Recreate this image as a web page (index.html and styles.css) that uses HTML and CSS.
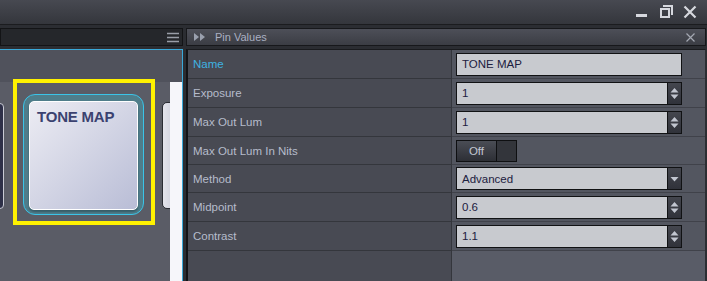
FILE: index.html
```html
<!DOCTYPE html>
<html lang="en">
<head>
    <title>Pin Values</title>
    <link rel="stylesheet" href="styles.css">
</head>
<body>

    <div class="titlebar">
        <svg class="win-btn" width="14" height="14" viewBox="0 0 14 14"><rect x="1" y="9" width="11" height="3" fill="#d6d8de"/></svg>
        <svg class="win-btn" width="14" height="14" viewBox="0 0 14 14"><path d="M4 1h9v9" fill="none" stroke="#d6d8de" stroke-width="2"/><rect x="2" y="4" width="8" height="8" fill="none" stroke="#d6d8de" stroke-width="2"/></svg>
        <svg class="win-btn" width="14" height="14" viewBox="0 0 14 14"><path d="M1.5 1.5l11 11M12.5 1.5l-11 11" stroke="#d6d8de" stroke-width="2.2"/></svg>
    </div>

    <div class="main">
        <div class="left">
            <div class="toolbar">
                <svg width="12" height="11" viewBox="0 0 12 11"><path d="M0 1.5h12M0 5.5h12M0 9.5h12" stroke="#9a9ea8" stroke-width="1.4"/></svg>
            </div>
            <div class="canvas">
                <div class="canvas-strip"></div>
                <div class="node-edge"></div>
                <div class="node-next"></div>
                <div class="white-col"></div>
                <div class="selection">
                    <div class="node-glow">
                        <div class="node-card">TONE MAP</div>
                    </div>
                </div>
            </div>
        </div>

        <div class="right">
            <div class="panel-head">
                <svg width="12" height="8" viewBox="0 0 12 8"><path d="M0 0l5 4-5 4zM6 0l5 4-5 4z" fill="#9aa0ae"/></svg>
                <span class="panel-title">Pin Values</span>
                <svg class="panel-close" width="9" height="9" viewBox="0 0 9 9"><path d="M0.5 0.5l8 8M8.5 0.5l-8 8" stroke="#a4a8b2" stroke-width="1.2"/></svg>
            </div>
            <div class="grid">
                <div class="label active">Name</div>
                <div class="value"><div class="field full">TONE MAP</div></div>

                <div class="label">Exposure</div>
                <div class="value"><div class="field"><span class="text">1</span><span class="spin"><svg width="9" height="13" viewBox="0 0 9 13"><path d="M4.5 1l4 4.5h-8zM4.5 12l4-4.5h-8z" fill="#c2c6d0"/></svg></span></div></div>

                <div class="label">Max Out Lum</div>
                <div class="value"><div class="field"><span class="text">1</span><span class="spin"><svg width="9" height="13" viewBox="0 0 9 13"><path d="M4.5 1l4 4.5h-8zM4.5 12l4-4.5h-8z" fill="#c2c6d0"/></svg></span></div></div>

                <div class="label">Max Out Lum In Nits</div>
                <div class="value"><div class="toggle"><span class="toggle-off">Off</span><span class="toggle-rest"></span></div></div>

                <div class="label">Method</div>
                <div class="value"><div class="field"><span class="text">Advanced</span><span class="spin"><svg width="9" height="6" viewBox="0 0 9 6"><path d="M0.5 1h8l-4 4.5z" fill="#c2c6d0"/></svg></span></div></div>

                <div class="label">Midpoint</div>
                <div class="value"><div class="field"><span class="text">0.6</span><span class="spin"><svg width="9" height="13" viewBox="0 0 9 13"><path d="M4.5 1l4 4.5h-8zM4.5 12l4-4.5h-8z" fill="#c2c6d0"/></svg></span></div></div>

                <div class="label">Contrast</div>
                <div class="value"><div class="field"><span class="text">1.1</span><span class="spin"><svg width="9" height="13" viewBox="0 0 9 13"><path d="M4.5 1l4 4.5h-8zM4.5 12l4-4.5h-8z" fill="#c2c6d0"/></svg></span></div></div>

                <div class="label filler"></div>
                <div class="value filler"></div>
            </div>
        </div>
    </div>

</body>
</html>
```

FILE: styles.css
```css
body {
    margin: 0;
    width: 707px;
    height: 281px;
    overflow: hidden;
    background-color: #2b2d32;
    font-family: 'Liberation Sans', Arial, sans-serif;
    font-size: 11.5px;
}

.titlebar {
    height: 24px;
    border-bottom: 1px solid #1b1c1f;
    background: linear-gradient(#474951, #34363c);
    display: flex;
    justify-content: flex-end;
    align-items: flex-start;
    padding-right: 10px;
    gap: 10px;
}

.win-btn {
    margin-top: 5px;
}

.main {
    display: flex;
    gap: 3px;
    padding-top: 3px;
    height: 253px;
}

.left {
    width: 183px;
    display: flex;
    flex-direction: column;
    gap: 3px;
}

.toolbar {
    height: 16px;
    background-color: #25272b;
    border: 1px solid #131416;
    display: flex;
    justify-content: flex-end;
    align-items: center;
    padding-right: 3px;
}

.canvas {
    flex: 1;
    position: relative;
    background-color: #5a5c66;
    border-right: 1px solid #3aa9d9;
    border-top: 1px solid #3aa9d9;
    overflow: hidden;
}

.canvas-strip {
    height: 32px;
    background-color: #50525c;
}

.node-edge {
    position: absolute;
    left: -6px;
    top: 53px;
    width: 8px;
    height: 104px;
    background-color: #2e3048;
    border: 1px solid #c8cad4;
    border-radius: 4px;
}

.node-next {
    position: absolute;
    left: 162px;
    top: 52px;
    width: 14px;
    height: 105px;
    background: linear-gradient(90deg, #e4e4ec, #c8cad8);
    border: 1px solid #2a2c34;
    border-radius: 5px;
}

.white-col {
    position: absolute;
    left: 170px;
    top: 32px;
    width: 12px;
    bottom: 0;
    background-color: #f6f6fa;
}

.selection {
    position: absolute;
    left: 13px;
    top: 29px;
    width: 128px;
    height: 127px;
    border: 4px solid #fff200;
    padding: 11px 0 0 6px;
    display: flex;
    align-items: flex-start;
}

.node-glow {
    box-sizing: border-box;
    width: 121px;
    height: 121px;
    border: 1px solid #3ac4e8;
    border-radius: 12px;
    background-color: #4f7d8a;
    display: flex;
    justify-content: center;
    align-items: flex-start;
    padding-top: 6px;
}

.node-card {
    box-sizing: border-box;
    width: 109px;
    height: 109px;
    padding: 6px 0 0 7px;
    border: 1px solid #ffffff;
    border-radius: 5px;
    background: linear-gradient(135deg, #ececf3, #b9bdd6);
    color: #3b4270;
    font-weight: bold;
    font-size: 15px;
    letter-spacing: -0.2px;
    box-shadow: 0 2px 2px rgba(20, 40, 50, 0.4);
}

.right {
    flex: 1;
    display: flex;
    flex-direction: column;
    gap: 3px;
    margin-right: 1px;
}

.panel-head {
    height: 16px;
    background: linear-gradient(#4d4f58, #3b3d44);
    border: 1px solid #17181b;
    display: flex;
    align-items: center;
    padding: 0 10px 0 7px;
}

.panel-title {
    color: #aab0c2;
    font-size: 11px;
    margin-left: 9px;
    flex: 1;
}

.grid {
    flex: 1;
    display: grid;
    grid-template-columns: 264px 1fr;
    grid-template-rows: 29px 29px 29px 28px 28px 29px 29px 1fr;
    border-left: 2px solid #121316;
    border-top: 1px solid #1a1b1e;
    border-right: 1px solid #2c2e33;
}

.label {
    background-color: #484a53;
    border-bottom: 1px solid #34363c;
    border-right: 1px solid #34363c;
    color: #b6bccb;
    padding-left: 5px;
    display: flex;
    align-items: center;
}

.label.active {
    color: #3fb2e2;
}

.value {
    background-color: #535660;
    border-bottom: 1px solid #40424a;
    display: flex;
    align-items: center;
    padding-left: 4px;
}

.filler {
    border-bottom: none;
}

.value.filler {
    background-color: #595c67;
}

.field {
    width: 224px;
    height: 21px;
    border: 1px solid #111214;
    background-color: #c8cacf;
    display: flex;
    color: #1c2040;
}

.field.full {
    align-items: center;
    padding-left: 5px;
    width: 219px;
}

.text {
    flex: 1;
    display: flex;
    align-items: center;
    padding-left: 5px;
    border-right: 1px solid #111214;
}

.spin {
    width: 13px;
    background: linear-gradient(#44464e, #30323a);
    display: flex;
    align-items: center;
    justify-content: center;
}

.toggle {
    display: flex;
    width: 59px;
    height: 20px;
    border: 1px solid #0e0f11;
}

.toggle-off {
    width: 39px;
    background: linear-gradient(#4a4d55, #2d2f35);
    border-right: 1px solid #0e0f11;
    color: #c2c6d2;
    display: flex;
    align-items: center;
    justify-content: center;
}

.toggle-rest {
    flex: 1;
    background-color: #33353b;
}
```
